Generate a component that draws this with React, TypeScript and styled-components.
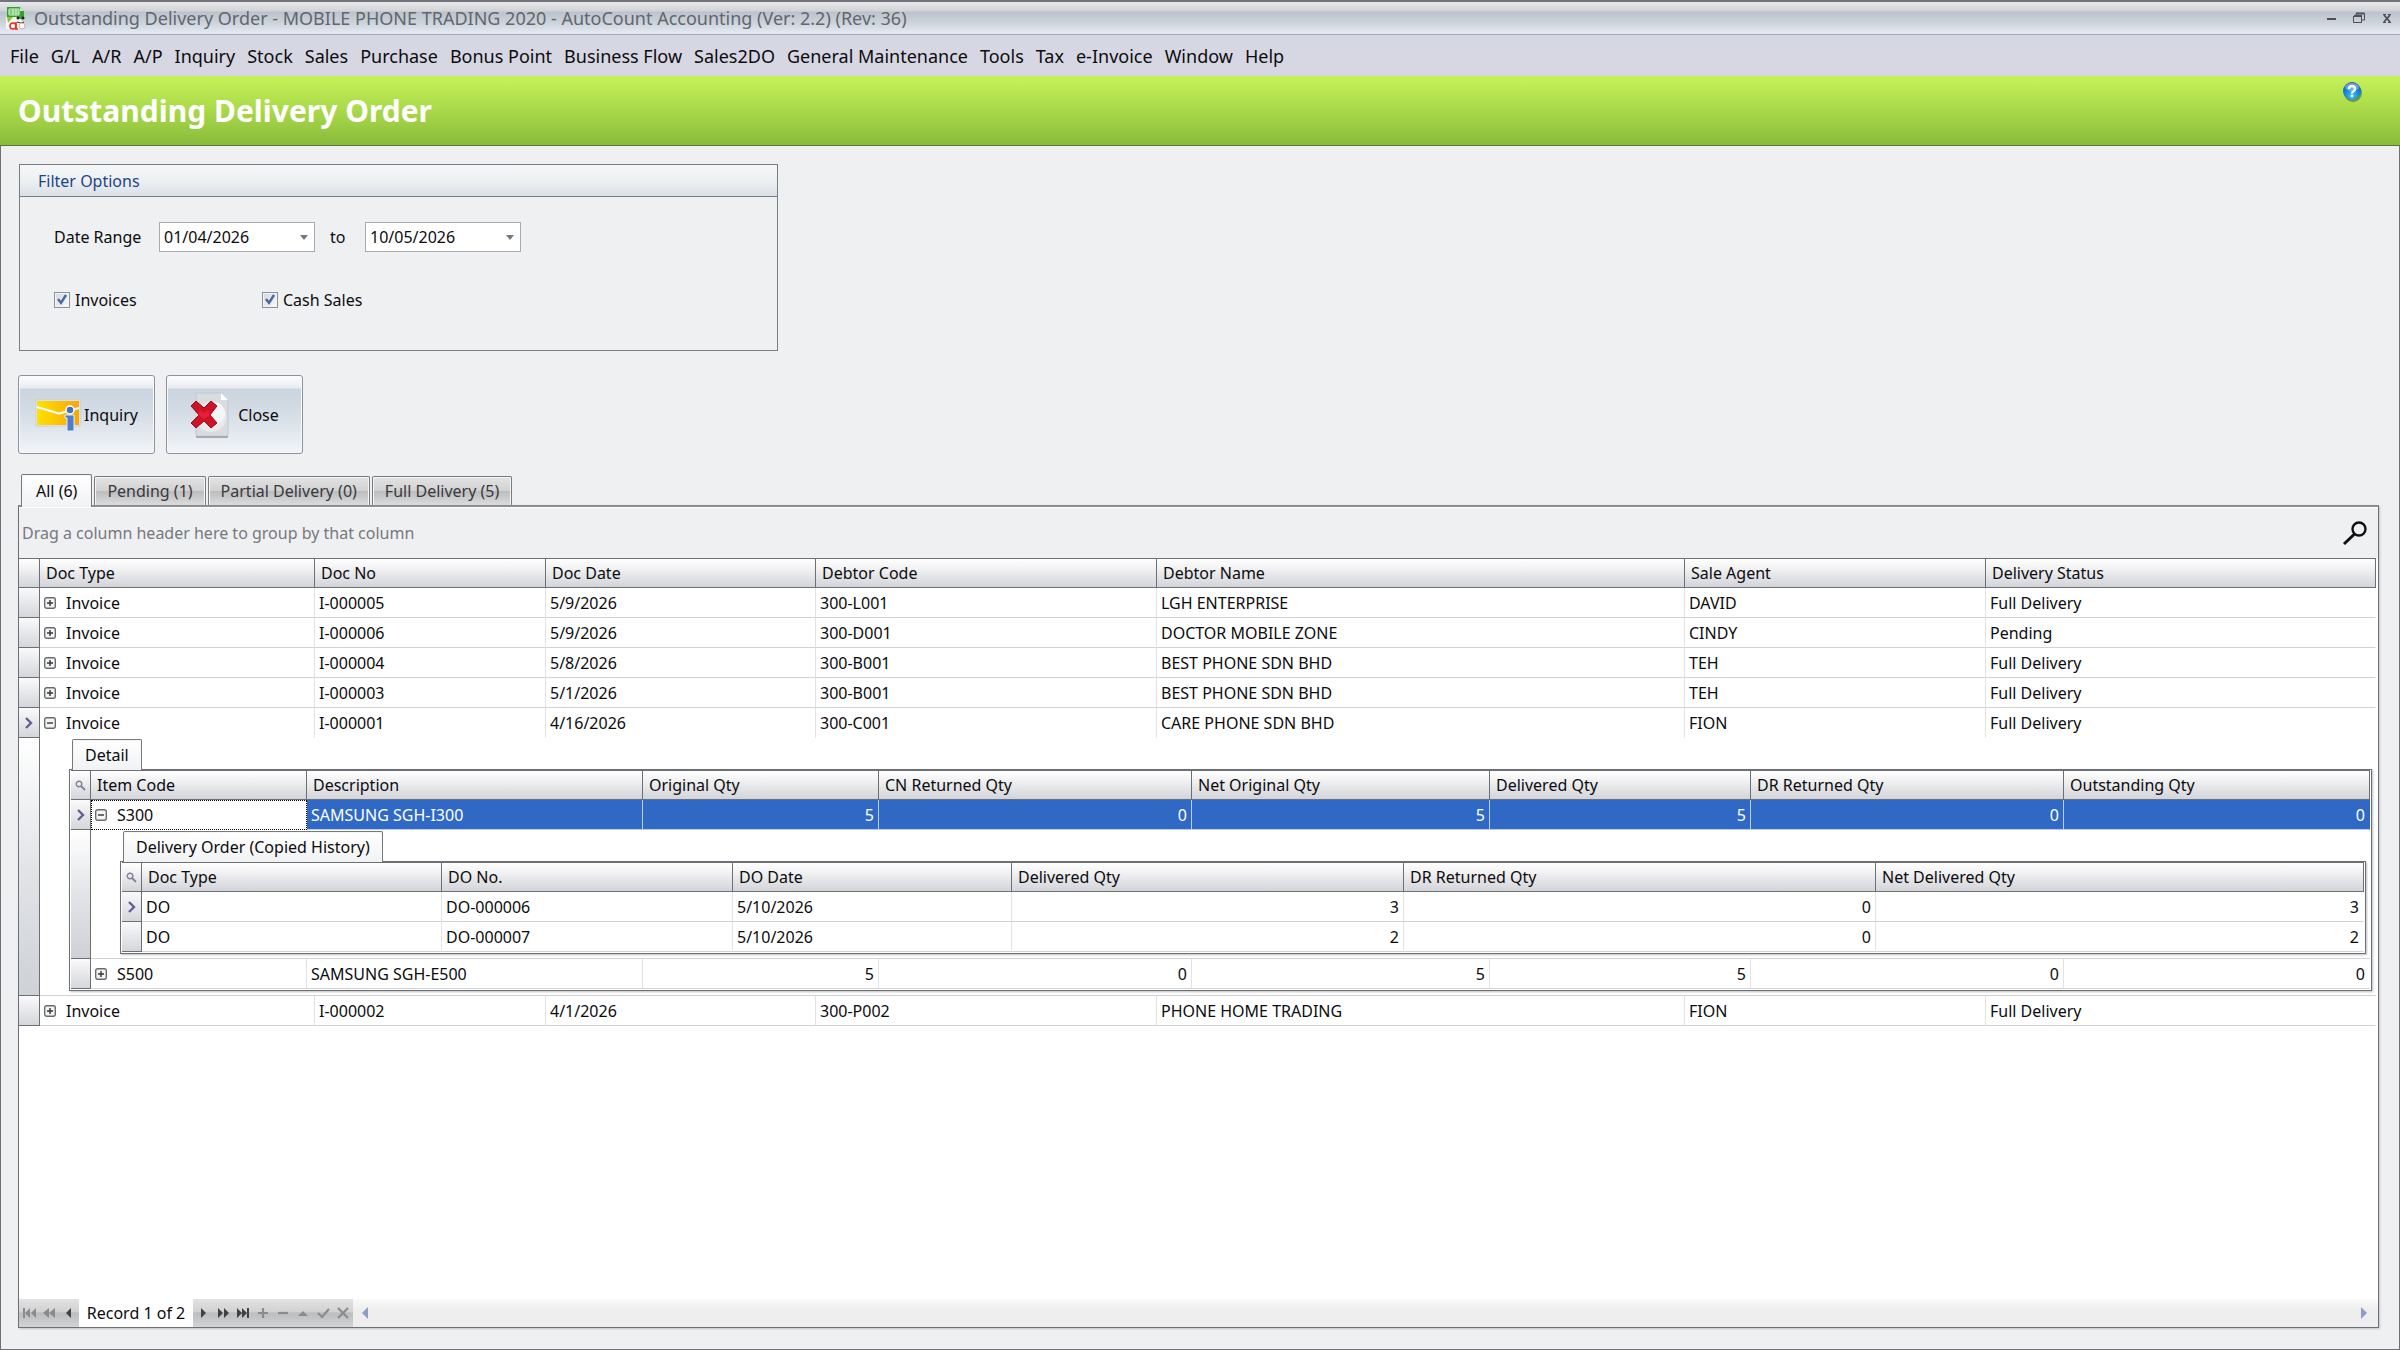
import React from "react";
import styled, { createGlobalStyle, css } from "styled-components";

const line = "#6c6f74";
const softLine = "#d2d2d4";
const fontStack = '"Noto Sans", "Open Sans", "DejaVu Sans", sans-serif';

const GlobalStyle = createGlobalStyle`
  *, *::before, *::after { box-sizing: border-box; }
  body {
    margin: 0;
    background: #eff0f2;
    color: #0c0c0e;
    font-family: ${fontStack};
    font-size: 16px;
    line-height: 20px;
  }
  button, input { font: inherit; color: inherit; margin: 0; }
`;

/* ---------- window frame ---------- */

const Window = styled.div`
  display: flex;
  flex-direction: column;
  min-height: 100vh;
`;

const TitleBar = styled.header`
  display: flex;
  align-items: center;
  height: 35px;
  padding: 0 4px 0 5px;
  border-top: 2px solid #74757b;
  border-bottom: 1px solid #a5a8b4;
  background: linear-gradient(#e8e9ee 0, #d2d3d5 9px, #bac3cb 10px, #cbd2da 20px, #e6eaf4 100%);
`;

const WindowTitle = styled.div`
  flex: 1;
  padding-left: 8px;
  font-size: 18px;
  line-height: 24px;
  color: #62666d;
  white-space: nowrap;
`;

const WindowButtons = styled.div`
  display: flex;
  gap: 10px;
`;

const BareButton = styled.button`
  display: flex;
  align-items: center;
  justify-content: center;
  padding: 0;
  border: 0;
  background: none;
`;

const WindowButton = styled(BareButton)`
  width: 18px;
  height: 18px;
`;

const MenuBar = styled.nav`
  display: flex;
  align-items: center;
  gap: 12px;
  height: 41px;
  padding: 0 10px;
  background: #d7d7e4;
`;

const MenuItem = styled(BareButton)`
  font-size: 18px;
  line-height: 24px;
  white-space: nowrap;
`;

const Banner = styled.div`
  display: flex;
  align-items: flex-start;
  justify-content: space-between;
  height: 70px;
  padding: 5px 37px 0 18px;
  border-bottom: 1px solid #5f7434;
  background: linear-gradient(#c6f259, #a9d949 50%, #89bb3c);
`;

const PageTitle = styled.h1`
  margin: 0;
  padding-top: 10px;
  font-size: 30px;
  line-height: 40px;
  font-weight: 700;
  color: #fff;
`;

const Body = styled.main`
  flex: 1;
  display: flex;
  flex-direction: column;
  align-items: stretch;
  padding: 18px 20px 21px 17px;
  border: 1px solid #6f7176;
  border-top: 0;
`;

/* ---------- filter panel ---------- */

const FilterPanel = styled.section`
  width: 759px;
  max-width: 100%;
  margin-left: 1px;
  border: 1px solid #7a7d82;
`;

const FilterTitle = styled.h2`
  margin: 0;
  height: 32px;
  padding: 0 18px;
  border-bottom: 1px solid #7a7d82;
  background: linear-gradient(#f5f7f8, #edf0f3 50%, #dbe0e8);
  font-size: 16px;
  line-height: 32px;
  font-weight: 400;
  color: #1c4587;
`;

const FilterBody = styled.div`
  display: flex;
  flex-direction: column;
  gap: 38px;
  padding: 25px 34px 40px;
`;

const FilterRow = styled.div`
  display: flex;
  align-items: center;
`;

const DateLabel = styled.label`
  width: 105px;
`;

const ToLabel = styled.label`
  width: 50px;
  padding-left: 15px;
`;

const DateBox = styled.div`
  display: flex;
  align-items: stretch;
  width: 156px;
  height: 30px;
  border: 1px solid #a9abb0;
  background: #fff;
`;

const DateInput = styled.input`
  flex: 1;
  min-width: 0;
  padding: 0 4px;
  border: 0;
  outline: 0;
  background: none;
`;

const DateDrop = styled(BareButton)`
  width: 20px;
`;

const CheckLabel = styled.label`
  display: flex;
  align-items: center;
  gap: 5px;
  width: 208px;
`;

const CheckMark = styled.span`
  display: grid;
  width: 16px;
  height: 16px;
  > * { grid-area: 1 / 1; }
  svg { pointer-events: none; }
`;

const CheckInput = styled.input`
  appearance: none;
  width: 16px;
  height: 16px;
  border: 1px solid #8e9196;
  background: linear-gradient(135deg, #d3d8df, #fafafa);
  box-shadow: inset 0 0 0 1px #f3f4f6;
`;

const Actions = styled.div`
  display: flex;
  gap: 11px;
  padding: 24px 0 20px;
`;

const ActionButton = styled.button<{ $gap: number }>`
  display: flex;
  align-items: center;
  justify-content: center;
  gap: ${(p) => p.$gap}px;
  width: 137px;
  height: 79px;
  padding: 0;
  border: 1px solid #8d919b;
  border-radius: 3px;
  box-shadow: inset 0 0 0 1px #f8f9fb;
  background: linear-gradient(#fdfdfe 0, #e8ebf0 12px, #cbd5df 13px, #d5dde6 50%, #f2f4f8 100%);
`;

/* ---------- tabs ---------- */

const TabStrip = styled.div`
  display: flex;
  align-items: flex-end;
  gap: 2px;
  padding-left: 3px;
`;

const Tab = styled.button<{ $active?: boolean }>`
  height: 29px;
  padding: 0 12px;
  border: 1px solid #77797d;
  border-bottom: 0;
  border-radius: 2px 2px 0 0;
  box-shadow: inset 1px 1px 0 #f6f6f7, inset -1px 0 0 #f6f6f7;
  background: linear-gradient(#e3e3e4, #d2d2d3 48%, #bcbdbf 52%, #dcdcdd);
  color: #38393c;
  white-space: nowrap;
  ${(p) =>
    p.$active &&
    css`
      position: relative;
      height: 33px;
      margin-bottom: -2px;
      padding: 0 14px;
      background: linear-gradient(#fff, #f1f2f4);
      color: #0c0c0e;
    `}
`;

const GridPanel = styled.section`
  flex: 1;
  display: flex;
  flex-direction: column;
  border: 1px solid #6c6f74;
  border-top: 2px solid #8b8d90;
  box-shadow: 1px 1px 2px #c4c5c8;
`;

const GroupRow = styled.div`
  display: flex;
  align-items: center;
  justify-content: space-between;
  height: 51px;
  padding: 0 10px 0 3px;
  border-top: 1px solid #fff;
  color: #77787c;
`;

const GridArea = styled.div`
  flex: 1;
  padding-right: 2px;
  background: #fff;
`;

/* ---------- data tables ---------- */

const Table = styled.table`
  width: 100%;
  table-layout: fixed;
  border-collapse: separate;
  border-spacing: 0;
`;

const cell = css`
  height: 30px;
  overflow: hidden;
  white-space: nowrap;
  vertical-align: middle;
`;

const HeadCell = styled.th`
  ${cell}
  padding: 0 6px;
  border: solid ${line};
  border-width: 1px 1px 1px 0;
  background: linear-gradient(#fff, #f1f1f3 35%, #d3d4d9);
  font-weight: 400;
  text-align: left;
`;

const HeadIndicator = styled(HeadCell)`
  padding: 0;
`;

const Indicator = styled.td<{ $tall?: boolean }>`
  ${cell}
  padding: 0;
  border: solid ${line};
  border-width: 0 1px 1px 0;
  background: ${(p) => (p.$tall ? "linear-gradient(#fff, #e2e4e8 50%, #ced1d6)" : "linear-gradient(#fafafb, #d5d6db)")};
`;

const IconCenter = styled.span`
  display: flex;
  justify-content: center;
`;

type CellProps = { $num?: boolean; $open?: boolean; $state?: "selected" | "focused" };

const Cell = styled.td<CellProps>`
  ${cell}
  padding: 0 4px;
  border: solid ${softLine};
  border-width: 0 1px 1px 0;
  border-right-color: #e2e2e4;
  text-align: ${(p) => (p.$num ? "right" : "left")};
  ${(p) => p.$open && css`border-bottom-color: transparent;`}
  ${(p) =>
    p.$state === "selected" &&
    css`
      border-color: #b9cdec;
      background: #2f69c5;
      color: #fff;
    `}
  ${(p) =>
    p.$state === "focused" &&
    css`
      border-color: transparent;
      outline: 1px dotted #000;
      outline-offset: -1px;
    `}
  &:last-child { border-right-color: transparent; }
`;

const TreeCell = styled.div`
  display: flex;
  align-items: center;
  gap: 10px;
`;

const ExpandButton = styled(BareButton)`
  width: 12px;
  height: 12px;
`;

const NestCell = styled.td`
  padding: 1px 4px 4px 29px;
  border-bottom: 1px solid ${softLine};
`;

const NestTab = styled(Tab)`
  position: relative;
  display: block;
  height: 31px;
  margin: 0 0 -1px 3px;
  background: linear-gradient(#fff, #f1f2f4);
  color: #0c0c0e;
`;

const NestPanel = styled.div`
  padding: 0 1px 1px 1px;
  border: 1px solid ${line};
  background: #fff;
  box-shadow: 1px 1px 2px #bdbec2;
`;

/* ---------- record navigator ---------- */

const Footer = styled.footer`
  display: flex;
  align-items: stretch;
  height: 28px;
  background: #fff;
`;

const NavGroup = styled.div`
  display: flex;
  align-items: center;
  background: linear-gradient(#e2e2e3, #d2d2d3 45%, #bcbdbe 50%, #d3d3d4);
`;

const NavButton = styled(BareButton)`
  width: 20px;
  height: 20px;
`;

const RecordText = styled.div`
  width: 114px;
  line-height: 28px;
  text-align: center;
  white-space: nowrap;
`;

const ScrollBar = styled.div`
  flex: 1;
  display: flex;
  align-items: center;
  justify-content: space-between;
  padding: 0 4px 0 2px;
  background: linear-gradient(#fafafa, #eee 40%);
`;

/* ---------- drawings ---------- */

const AppLogo = () => (
  <svg width="21" height="25" viewBox="0 0 21 25" aria-hidden="true">
    <path d="M2 1h13l4 4v8H2z" fill="#32a12c" />
    <path d="M15 1l4 4h-4z" fill="#c9efc2" />
    <path d="M4 3h10v6H4zM4 5h10M4 7h10M8 3v6M11 3v6" fill="none" stroke="#dff7da" strokeWidth="1" />
    <path d="M1 11h12l5 5v7H1z" fill="#f6f6f2" />
    <path d="M2 11h6l-5 6z" fill="#8ac43d" />
    <circle cx="13" cy="12" r="1.500" fill="#222" />
    <circle cx="18" cy="12" r="1.500" fill="#222" />
    <path d="M12 16q4 2 7 0" fill="none" stroke="#333" strokeWidth="1" />
    <circle cx="8" cy="20" r="3" fill="none" stroke="#e23127" strokeWidth="1.600" />
    <path d="M11 16v7h2" fill="none" stroke="#e23127" strokeWidth="1.600" />
    <circle cx="17" cy="20" r="3" fill="#fff" stroke="#d9a9a5" strokeWidth="1" />
  </svg>
);

const HelpIcon = () => (
  <svg width="21" height="22" viewBox="0 0 21 22" aria-hidden="true">
    <defs>
      <radialGradient id="help" cx="50%" cy="75%" r="70%">
        <stop offset="0" stopColor="#3cc4ff" />
        <stop offset="0.6" stopColor="#1481dc" />
        <stop offset="1" stopColor="#1b5cab" />
      </radialGradient>
    </defs>
    <circle cx="11" cy="12" r="9" fill="#3f6b1e" opacity="0.6" />
    <circle cx="10" cy="10" r="9" fill="url(#help)" />
    <ellipse cx="10" cy="6" rx="7" ry="4" fill="#fff" opacity="0.35" />
    <path d="M7 8q0-3 3-3t3 3q0 1.500-1.500 2.300T10 12.500" fill="none" stroke="#fff" strokeWidth="2.400" />
    <circle cx="10" cy="15" r="1.400" fill="#fff" />
  </svg>
);

const InquiryIcon = () => (
  <svg width="46" height="34" viewBox="0 0 46 34" aria-hidden="true">
    <defs>
      <linearGradient id="mail" x1="0" x2="1" y1="0" y2="0">
        <stop offset="0" stopColor="#ffe000" />
        <stop offset="1" stopColor="#f6a70b" />
      </linearGradient>
    </defs>
    <rect x="1" y="2" width="44" height="26" fill="#f4f4f4" stroke="#c9cbd0" />
    <rect x="2" y="3" width="42" height="24" fill="url(#mail)" />
    <path d="M2 9l20 6q2 1 4 0l18-5" fill="none" stroke="#fff" strokeWidth="2" />
    <circle cx="35" cy="12" r="4" fill="#3f74c4" stroke="#fff" strokeWidth="1.500" />
    <path d="M30 17h9v16h-7V20h-2z" fill="#4b7fcb" stroke="#e8eefa" strokeWidth="1" />
  </svg>
);

const CloseIcon = () => (
  <svg width="40" height="46" viewBox="0 0 40 46" aria-hidden="true">
    <path d="M6 1h25l7 7v36H6z" fill="#dadddf" stroke="#c3c7cb" />
    <path d="M31 1v7h7z" fill="#fff" />
    <path d="M6 45h32" stroke="#a7abb0" strokeWidth="2" />
    <circle cx="21" cy="25" r="15" fill="#e8eaeb" />
    <circle cx="24" cy="21" r="11" fill="#f4f5f5" />
    <path d="M1 14l5-5 8 7 7-7 6 5-7 9 7 8-6 5-7-7-8 7-5-5 8-8z" fill="#cf1228" stroke="#8f0e1d" strokeWidth="1" />
    <path d="M10 18l4 3 4-3 2 5-6 4-6-4z" fill="#f2243b" opacity="0.7" />
  </svg>
);

const SearchIcon = () => (
  <svg width="26" height="26" viewBox="0 0 26 26" fill="none" stroke="#111" aria-hidden="true">
    <circle cx="17" cy="9" r="6.500" strokeWidth="2.400" />
    <path d="M12.500 14L2 24" strokeWidth="3" />
  </svg>
);

const SmallSearch = () => (
  <svg width="11" height="11" viewBox="0 0 11 11" fill="none" stroke="#83809d" aria-hidden="true">
    <circle cx="4" cy="4" r="2.800" strokeWidth="1.400" />
    <path d="M6 6l4 4" strokeWidth="1.800" />
  </svg>
);

const CurrentRow = () => (
  <svg width="10" height="12" viewBox="0 0 10 12" aria-hidden="true">
    <path d="M2 1l5 5-5 5" fill="none" stroke="#63608f" strokeWidth="2.400" />
  </svg>
);

const Expander = ({ open }: { open?: boolean }) => (
  <ExpandButton type="button" aria-label={open ? "Collapse row" : "Expand row"}>
    <svg width="12" height="12" viewBox="0 0 12 12" aria-hidden="true">
      <rect x="0.700" y="0.700" width="10.600" height="10.600" rx="2" fill="#f4f4f5" stroke="#6a6b6f" strokeWidth="1.400" />
      <path d={open ? "M3 6h6" : "M3 6h6M6 3v6"} stroke="#333438" strokeWidth="1.400" />
    </svg>
  </ExpandButton>
);

const DropArrow = () => (
  <svg width="8" height="5" viewBox="0 0 8 5" aria-hidden="true">
    <path d="M0 0h8L4 5z" fill="#77797d" />
  </svg>
);

const NavIcon = ({ d, faded, stroked }: { d: string; faded?: boolean; stroked?: boolean }) => {
  const tone = faded ? "#8a8b8e" : "#3f4145";
  return (
    <svg width="14" height="12" viewBox="0 0 14 12" aria-hidden="true">
      <path d={d} fill={stroked ? "none" : tone} stroke={stroked ? tone : "none"} strokeWidth="2.200" />
    </svg>
  );
};

/* ---------- data ---------- */

const menu = ["File", "G/L", "A/R", "A/P", "Inquiry", "Stock", "Sales", "Purchase", "Bonus Point", "Business Flow", "Sales2DO", "General Maintenance", "Tools", "Tax", "e-Invoice", "Window", "Help"];
const tabs = ["All (6)", "Pending (1)", "Partial Delivery (0)", "Full Delivery (5)"];

type Column = { title: string; width?: number; num?: boolean };

const docColumns: Column[] = [
  { title: "Doc Type", width: 275 },
  { title: "Doc No", width: 231 },
  { title: "Doc Date", width: 270 },
  { title: "Debtor Code", width: 341 },
  { title: "Debtor Name", width: 528 },
  { title: "Sale Agent", width: 301 },
  { title: "Delivery Status" },
];

const docs = [
  ["Invoice", "I-000005", "5/9/2026", "300-L001", "LGH ENTERPRISE", "DAVID", "Full Delivery"],
  ["Invoice", "I-000006", "5/9/2026", "300-D001", "DOCTOR MOBILE ZONE", "CINDY", "Pending"],
  ["Invoice", "I-000004", "5/8/2026", "300-B001", "BEST PHONE SDN BHD", "TEH", "Full Delivery"],
  ["Invoice", "I-000003", "5/1/2026", "300-B001", "BEST PHONE SDN BHD", "TEH", "Full Delivery"],
  ["Invoice", "I-000001", "4/16/2026", "300-C001", "CARE PHONE SDN BHD", "FION", "Full Delivery"],
  ["Invoice", "I-000002", "4/1/2026", "300-P002", "PHONE HOME TRADING", "FION", "Full Delivery"],
];

const itemColumns: Column[] = [
  { title: "Item Code", width: 216 },
  { title: "Description", width: 336 },
  { title: "Original Qty", width: 236, num: true },
  { title: "CN Returned Qty", width: 313, num: true },
  { title: "Net Original Qty", width: 298, num: true },
  { title: "Delivered Qty", width: 261, num: true },
  { title: "DR Returned Qty", width: 313, num: true },
  { title: "Outstanding Qty", num: true },
];

const items = [
  ["S300", "SAMSUNG SGH-I300", "5", "0", "5", "5", "0", "0"],
  ["S500", "SAMSUNG SGH-E500", "5", "0", "5", "5", "0", "0"],
];

const orderColumns: Column[] = [
  { title: "Doc Type", width: 300 },
  { title: "DO No.", width: 291 },
  { title: "DO Date", width: 279 },
  { title: "Delivered Qty", width: 392, num: true },
  { title: "DR Returned Qty", width: 472, num: true },
  { title: "Net Delivered Qty", num: true },
];

const orders = [
  ["DO", "DO-000006", "5/10/2026", "3", "0", "3"],
  ["DO", "DO-000007", "5/10/2026", "2", "0", "2"],
];

const navBack = [
  { name: "First record", d: "M1 1h2v10H1zM8 1v10L3 6zM14 1v10L9 6z", faded: true },
  { name: "Previous page", d: "M7 1v10L1 6zM13 1v10L7 6z", faded: true },
  { name: "Previous record", d: "M9 1v10L4 6z" },
];

const navForward = [
  { name: "Next record", d: "M5 1v10l5-5z" },
  { name: "Next page", d: "M2 1v10l5-5zM8 1v10l5-5z" },
  { name: "Last record", d: "M1 1v10l5-5zM6 1v10l5-5zM11 1h2v10h-2z" },
  { name: "Append", d: "M2 6h10M7 1v10", faded: true, stroked: true },
  { name: "Delete", d: "M2 6h10", faded: true, stroked: true },
  { name: "Edit", d: "M2 9h10L7 4z", faded: true },
  { name: "End edit", d: "M2 6l4 4 7-8", faded: true, stroked: true },
  { name: "Cancel edit", d: "M2 1l10 10M12 1L2 11", faded: true, stroked: true },
];

/* ---------- grid ---------- */

type DataGridProps = {
  columns: Column[];
  rows: string[][];
  indicatorWidth: number;
  nested?: boolean;
  tree?: boolean;
  current?: number;
  openRow?: number;
  focusRow?: number;
  detail?: React.ReactNode;
};

const DataGrid = ({ columns, rows, indicatorWidth, nested, tree, current, openRow, focusRow, detail }: DataGridProps) => (
  <Table>
    <colgroup>
      <col width={indicatorWidth} />
      {columns.map((c) => (
        <col key={c.title} width={c.width} />
      ))}
    </colgroup>
    <thead>
      <tr>
        <HeadIndicator aria-label="Row">{nested && <IconCenter><SmallSearch /></IconCenter>}</HeadIndicator>
        {columns.map((c) => (
          <HeadCell key={c.title} scope="col">{c.title}</HeadCell>
        ))}
      </tr>
    </thead>
    <tbody>
      {rows.map((row, r) => (
        <React.Fragment key={r}>
          <tr>
            <Indicator>{r === current && <IconCenter><CurrentRow /></IconCenter>}</Indicator>
            {row.map((value, c) => (
              <Cell
                key={c}
                $num={columns[c].num}
                $open={r === openRow}
                $state={r === focusRow ? (c === 0 ? "focused" : "selected") : undefined}
              >
                {tree && c === 0 ? <TreeCell><Expander open={r === openRow} />{value}</TreeCell> : value}
              </Cell>
            ))}
          </tr>
          {r === openRow && (
            <tr>
              <Indicator $tall />
              <NestCell colSpan={columns.length}>{detail}</NestCell>
            </tr>
          )}
        </React.Fragment>
      ))}
    </tbody>
  </Table>
);

const DateField = ({ id, value, name }: { id: string; value: string; name: string }) => (
  <DateBox>
    <DateInput id={id} type="text" defaultValue={value} />
    <DateDrop type="button" aria-label={name}><DropArrow /></DateDrop>
  </DateBox>
);

const CheckField = ({ text }: { text: string }) => (
  <CheckLabel>
    <CheckMark>
      <CheckInput type="checkbox" defaultChecked />
      <svg width="16" height="16" viewBox="0 0 16 16" fill="none" aria-hidden="true">
        <path d="M4 7l3 4 5-8" stroke="#45689f" strokeWidth="2.400" />
      </svg>
    </CheckMark>
    {text}
  </CheckLabel>
);

export default function App() {
  return (
    <Window>
      <GlobalStyle />
      <TitleBar>
        <AppLogo />
        <WindowTitle>Outstanding Delivery Order - MOBILE PHONE TRADING 2020 - AutoCount Accounting (Ver: 2.2) (Rev: 36)</WindowTitle>
        <WindowButtons>
          <WindowButton type="button" aria-label="Minimize">
            <svg width="12" height="12" viewBox="0 0 12 12"><path d="M2 7h9" stroke="#4b4f5a" strokeWidth="2" /></svg>
          </WindowButton>
          <WindowButton type="button" aria-label="Restore">
            <svg width="12" height="12" viewBox="0 0 12 12" fill="none" stroke="#4b4f5a">
              <path d="M3 3V1.500h8.500V8H9" />
              <path d="M3 1.500h8.500M1 4h8" strokeWidth="2" />
              <path d="M0.500 4v6.500h8V4" />
            </svg>
          </WindowButton>
          <WindowButton type="button" aria-label="Close window">
            <svg width="12" height="12" viewBox="0 0 12 12" fill="none" stroke="#4b4f5a">
              <path d="M3 3l6 7M9 3l-6 7" strokeWidth="1.800" />
              <path d="M2 2.500h3M7 2.500h3M2 10.500h3M7 10.500h3" />
            </svg>
          </WindowButton>
        </WindowButtons>
      </TitleBar>
      <MenuBar aria-label="Main menu">
        {menu.map((m) => (
          <MenuItem key={m} type="button">{m}</MenuItem>
        ))}
      </MenuBar>
      <Banner>
        <PageTitle>Outstanding Delivery Order</PageTitle>
        <BareButton type="button" aria-label="Help"><HelpIcon /></BareButton>
      </Banner>
      <Body>
        <FilterPanel>
          <FilterTitle>Filter Options</FilterTitle>
          <FilterBody>
            <FilterRow>
              <DateLabel htmlFor="from">Date Range</DateLabel>
              <DateField id="from" value="01/04/2026" name="Pick start date" />
              <ToLabel htmlFor="until">to</ToLabel>
              <DateField id="until" value="10/05/2026" name="Pick end date" />
            </FilterRow>
            <FilterRow>
              <CheckField text="Invoices" />
              <CheckField text="Cash Sales" />
            </FilterRow>
          </FilterBody>
        </FilterPanel>
        <Actions>
          <ActionButton type="button" $gap={3}><InquiryIcon />Inquiry</ActionButton>
          <ActionButton type="button" $gap={8}><CloseIcon />Close</ActionButton>
        </Actions>
        <TabStrip role="tablist">
          {tabs.map((t, i) => (
            <Tab key={t} type="button" role="tab" aria-selected={i === 0} $active={i === 0}>{t}</Tab>
          ))}
        </TabStrip>
        <GridPanel>
          <GroupRow>
            Drag a column header here to group by that column
            <BareButton type="button" aria-label="Find"><SearchIcon /></BareButton>
          </GroupRow>
          <GridArea>
            <DataGrid
              columns={docColumns}
              rows={docs}
              indicatorWidth={21}
              tree
              current={4}
              openRow={4}
              detail={
                <>
                  <NestTab type="button">Detail</NestTab>
                  <NestPanel>
                    <DataGrid
                      columns={itemColumns}
                      rows={items}
                      indicatorWidth={20}
                      nested
                      tree
                      current={0}
                      openRow={0}
                      focusRow={0}
                      detail={
                        <>
                          <NestTab type="button">Delivery Order (Copied History)</NestTab>
                          <NestPanel>
                            <DataGrid columns={orderColumns} rows={orders} indicatorWidth={20} nested current={0} />
                          </NestPanel>
                        </>
                      }
                    />
                  </NestPanel>
                </>
              }
            />
          </GridArea>
          <Footer>
            <NavGroup>
              {navBack.map((n) => (
                <NavButton key={n.name} type="button" aria-label={n.name}><NavIcon {...n} /></NavButton>
              ))}
            </NavGroup>
            <RecordText>Record 1 of 2</RecordText>
            <NavGroup>
              {navForward.map((n) => (
                <NavButton key={n.name} type="button" aria-label={n.name}><NavIcon {...n} /></NavButton>
              ))}
            </NavGroup>
            <ScrollBar>
              <NavButton type="button" aria-label="Scroll left">
                <svg width="8" height="12" viewBox="0 0 8 12"><path d="M7 0v12L1 6z" fill="#8f9cc6" /></svg>
              </NavButton>
              <NavButton type="button" aria-label="Scroll right">
                <svg width="8" height="12" viewBox="0 0 8 12"><path d="M1 0v12l6-6z" fill="#8f9cc6" /></svg>
              </NavButton>
            </ScrollBar>
          </Footer>
        </GridPanel>
      </Body>
    </Window>
  );
}
